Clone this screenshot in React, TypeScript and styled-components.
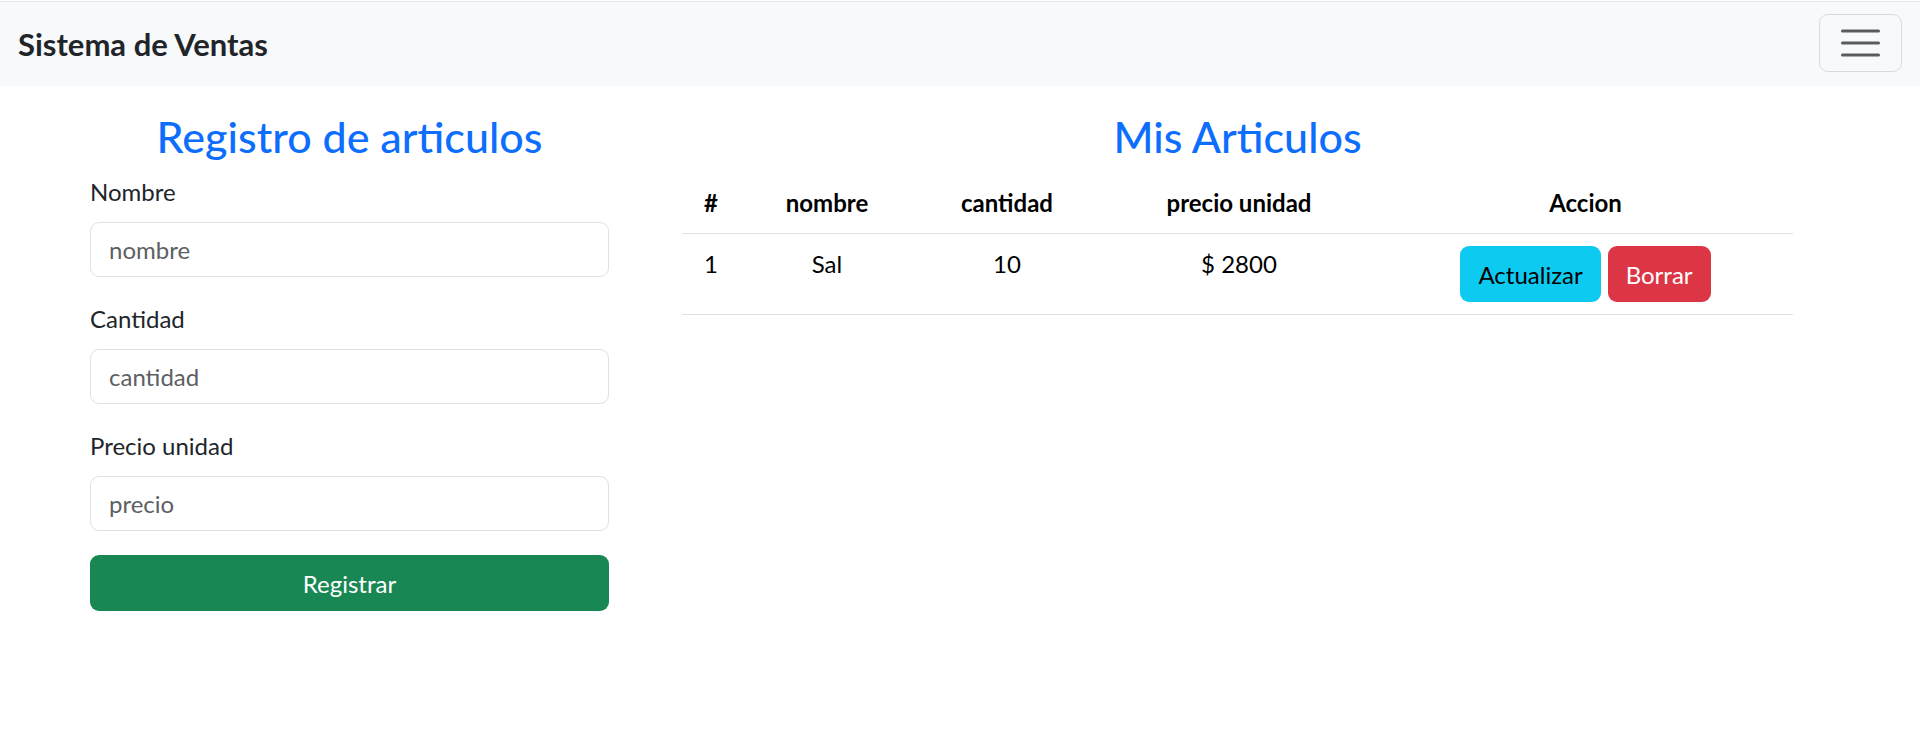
import React, { FC } from "react";
import styled, { createGlobalStyle } from "styled-components";

const GlobalStyle = createGlobalStyle`
  body {
    margin: 0;
    font-family: Lato, "Noto Sans", "Liberation Sans", sans-serif;
    color: #212529;
    background: #fff;
  }
`

const Page = styled.div`
  padding-top: 1px;
`
const Navbar = styled.nav`
  display: flex;
  align-items: center;
  justify-content: space-between;
  height: 84px;
  padding: 0 18px;
  background: #f8f9fa;
  border-top: 1px solid #e3e4e6;
`
const Brand = styled.span`
  font-size: 31px;
  font-weight: 700;
  color: #212529;
`
const Toggler = styled.button`
  display: flex;
  align-items: center;
  justify-content: center;
  width: 83px;
  height: 58px;
  margin-top: -2px;
  padding: 0;
  background: transparent;
  border: 1.5px solid rgba(0, 0, 0, 0.12);
  border-radius: 9px;
`
const Main = styled.main`
  display: flex;
  gap: 73px;
  padding: 26px 127px 0 90px;
`
const LeftCol = styled.section`
  flex: none;
  width: 519px;
`
const RightCol = styled.section`
  flex: 1;
`
const Title = styled.h3`
  margin: 0 0 12px;
  font-size: 43px;
  font-weight: 500;
  line-height: 50px;
  text-align: center;
  color: #0d6efd;
`
const Field = styled.div`
  margin-bottom: 24px;
`
const Label = styled.label`
  display: block;
  margin-bottom: 12px;
  font-size: 24px;
  line-height: 36px;
`
const Input = styled.input`
  display: block;
  box-sizing: border-box;
  width: 100%;
  height: 55px;
  padding: 0 18px;
  font-family: inherit;
  font-size: 24px;
  color: #212529;
  border: 1px solid #dee2e6;
  border-radius: 9px;
  &::placeholder {
    color: #5c5f63;
  }
`
const SubmitButton = styled.button`
  display: block;
  width: 100%;
  height: 56px;
  margin-top: 3px;
  font-family: inherit;
  font-size: 24px;
  color: #fff;
  background: #198754;
  border: none;
  border-radius: 9px;
`
const Table = styled.table`
  width: 100%;
  margin-top: -1px;
  table-layout: fixed;
  border-collapse: collapse;
  color: #000;
  font-size: 24px;
`
const Th = styled.th`
  padding: 12px;
  line-height: 36px;
  font-weight: 700;
  text-align: center;
  border-bottom: 1px solid #dee2e6;
`
const Td = styled.td`
  padding: 12px;
  line-height: 36px;
  text-align: center;
  vertical-align: top;
  border-bottom: 1px solid #dee2e6;
`
const Actions = styled.div`
  display: flex;
  justify-content: center;
  gap: 7px;
`
const ActionButton = styled.button<{ $variant: "info" | "danger" }>`
  height: 56px;
  padding: 0 18px;
  font-family: inherit;
  font-size: 24px;
  border: none;
  border-radius: 9px;
  color: ${(p) => (p.$variant === "info" ? "#000" : "#fff")};
  background: ${(p) => (p.$variant === "info" ? "#0dcaf0" : "#dc3545")};
`

interface Articulo {
  nombre: string
  cantidad: number
  precio: number
}

const articulos: Articulo[] = [{ nombre: "Sal", cantidad: 10, precio: 2800 }]

const columnWidths = [58, 174, 186, 278]

const MenuIcon: FC = () => (
  <svg width="45" height="45" viewBox="0 0 45 45">
    <g stroke="#595c5f" strokeWidth="3" strokeLinecap="round">
      <line x1="4.5" y1="10" x2="40.5" y2="10" />
      <line x1="4.5" y1="22" x2="40.5" y2="22" />
      <line x1="4.5" y1="34" x2="40.5" y2="34" />
    </g>
  </svg>
)

const App: FC = () => {
  return (
    <Page>
      <GlobalStyle />
      <Navbar>
        <Brand>Sistema de Ventas</Brand>
        <Toggler aria-label="menu">
          <MenuIcon />
        </Toggler>
      </Navbar>
      <Main>
        <LeftCol>
          <Title>Registro de articulos</Title>
          <Field>
            <Label>Nombre</Label>
            <Input placeholder="nombre" />
          </Field>
          <Field>
            <Label>Cantidad</Label>
            <Input placeholder="cantidad" />
          </Field>
          <Field>
            <Label>Precio unidad</Label>
            <Input placeholder="precio" />
          </Field>
          <SubmitButton>Registrar</SubmitButton>
        </LeftCol>
        <RightCol>
          <Title>Mis Articulos</Title>
          <Table>
            <colgroup>
              {columnWidths.map((w) => (
                <col key={w} style={{ width: w }} />
              ))}
              <col />
            </colgroup>
            <thead>
              <tr>
                <Th>#</Th>
                <Th>nombre</Th>
                <Th>cantidad</Th>
                <Th>precio unidad</Th>
                <Th>Accion</Th>
              </tr>
            </thead>
            <tbody>
              {articulos.map((a, i) => (
                <tr key={i}>
                  <Td>{i + 1}</Td>
                  <Td>{a.nombre}</Td>
                  <Td>{a.cantidad}</Td>
                  <Td>$ {a.precio}</Td>
                  <Td>
                    <Actions>
                      <ActionButton $variant="info">Actualizar</ActionButton>
                      <ActionButton $variant="danger">Borrar</ActionButton>
                    </Actions>
                  </Td>
                </tr>
              ))}
            </tbody>
          </Table>
        </RightCol>
      </Main>
    </Page>
  )
}

export default App
